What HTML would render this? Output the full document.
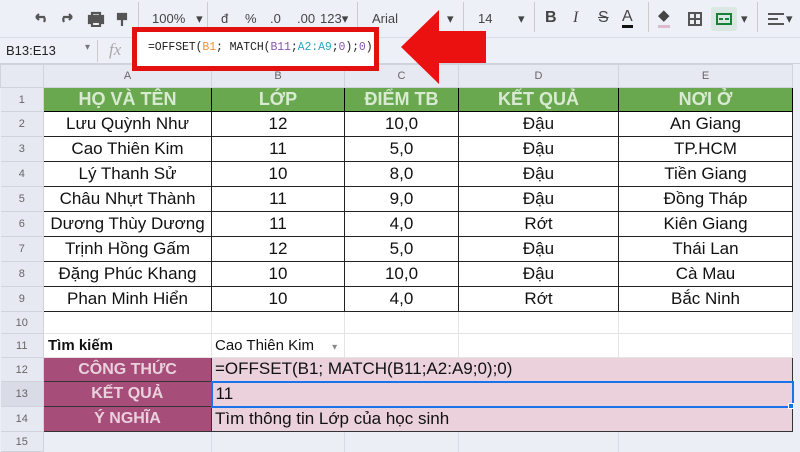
<!DOCTYPE html>
<html><head><meta charset="utf-8"><style>
*{margin:0;padding:0;box-sizing:border-box}
body{width:800px;height:450px;overflow:hidden;background:#eceef6;font-family:"Liberation Sans",Arial,sans-serif;position:relative}
.tb{position:absolute;left:0;top:0;width:800px;height:38px;background:#eef0f8;border-bottom:1px solid #dadce6;color:#444;font-size:13px}
.tb span{position:absolute;top:11px}
.fb{position:absolute;left:0;top:38px;width:800px;height:26px;background:#eef0f8;border-bottom:1px solid #d0d2dc}
table{position:absolute;left:0;top:64px;border-collapse:collapse;table-layout:fixed}
td{overflow:hidden;white-space:nowrap;text-align:center;font-size:17px;color:#111;padding:0}
td.rh{background:#e6e8f2;color:#666;font-size:11px;border:1px solid #d0d2dc;border-left:none}
tr.ch td{background:#e6e8f2;color:#666;font-size:11px;border:1px solid #d0d2dc}
tr.g td.d{background:#6aa84f;color:#d9ead3;font-weight:bold;font-size:18px;border:1px solid #000}
tr.r td.d{background:#fff;border:1px solid #222}
tr.e td.d{background:#fff;border:1px solid #e4e4e4}
td.p{background:#a64d79;color:#ead1dc;font-weight:bold;font-size:16px;border:1px solid #333}
td.k{background:#ead1dc;text-align:left;padding-left:3px;border:1px solid #333}
</style></head><body>
<div class="tb">
<svg style="position:absolute;left:32px;top:11px" width="100" height="16" viewBox="0 0 100 16" fill="none" stroke="#555" stroke-width="2.2"><path d="M4 6h8a5 5 0 0 1 0 5M4 6l3-3M4 6l3 3"/><path d="M40 6h-8a5 5 0 0 0 0 5M40 6l-3-3M40 6l-3 3"/><rect x="57" y="5" width="14" height="7" fill="#555"/><rect x="60" y="2" width="8" height="3"/><rect x="60" y="11" width="8" height="4" fill="#fff"/><path d="M86 3h8v5h-8zM90 8v7" fill="#555"/></svg>
<span style="left:138px;top:2px;height:30px;border-left:1px solid #ccc"></span>
<span style="left:152px">100%&nbsp;&nbsp;&nbsp;▾</span>
<span style="left:207px;top:2px;height:30px;border-left:1px solid #ccc"></span>
<span style="left:221px">đ</span><span style="left:245px">%</span><span style="left:270px">.0</span><span style="left:297px">.00</span><span style="left:320px">123▾</span>
<span style="left:357px;top:2px;height:30px;border-left:1px solid #ccc"></span>
<span style="left:372px">Arial</span><span style="left:447px">▾</span>
<span style="left:463px;top:2px;height:30px;border-left:1px solid #ccc"></span>
<span style="left:478px">14</span><span style="left:518px">▾</span>
<span style="left:534px;top:2px;height:30px;border-left:1px solid #ccc"></span>
<span style="left:545px;font-weight:bold;font-size:16px;top:9px">B</span><span style="left:573px;font-style:italic;font-size:16px;top:9px;font-family:'Liberation Serif'">I</span><span style="left:598px;text-decoration:line-through;font-size:16px;top:9px">S</span><span style="left:622px;font-size:16px;top:8px;border-bottom:3px solid #111;line-height:17px">A</span>
<span style="left:648px;top:2px;height:30px;border-left:1px solid #ccc"></span>
<span style="left:658px;font-size:15px;top:7px;border-bottom:3px solid #ddbcd0;line-height:18px">◆</span>
<svg style="position:absolute;left:688px;top:12px" width="14" height="14" fill="none" stroke="#555" stroke-width="2"><rect x="1" y="1" width="12" height="12"/><path d="M7 1v12M1 7h12"/></svg>
<span style="left:711px;top:7px;width:26px;height:24px;background:#dbe7e3;border-radius:3px"></span>
<svg style="position:absolute;left:716px;top:12px" width="16" height="14" fill="none" stroke="#188038" stroke-width="2"><path d="M1 1v12M15 1v12M3 7h4M13 7h-4M1 2h14M1 12h14"/></svg>
<span style="left:741px">▾</span>
<span style="left:757px;top:2px;height:30px;border-left:1px solid #ccc"></span>
<svg style="position:absolute;left:768px;top:12px" width="16" height="14" stroke="#555" stroke-width="2"><path d="M0 2h16M0 7h10M0 12h16"/></svg><span style="left:786px">▾</span>
</div>
<div class="fb">
<div style="position:absolute;left:6px;top:5px;font-size:13px;color:#222">B13:E13</div>
<div style="position:absolute;left:85px;top:4px;font-size:10px;color:#777">▾</div>
<div style="position:absolute;left:97px;top:2px;height:22px;border-left:1px solid #ccc"></div>
<div style="position:absolute;left:109px;top:2px;font-size:17px;font-style:italic;color:#aaa;font-family:'Liberation Serif'">fx</div>
<div style="position:absolute;left:137px;top:2px;height:22px;border-left:1px solid #ccc"></div>
</div>
<table>
<colgroup><col style="width:43px"><col style="width:168px"><col style="width:133px"><col style="width:114px"><col style="width:160px"><col style="width:174px"></colgroup>
<tr class="ch" style="height:23px"><td></td><td>A</td><td>B</td><td>C</td><td>D</td><td>E</td></tr>
<tr class="g" style="height:24px"><td class="rh">1</td><td class="d">HỌ VÀ TÊN</td><td class="d">LỚP</td><td class="d">ĐIỂM TB</td><td class="d">KẾT QUẢ</td><td class="d">NƠI Ở</td></tr>
<tr class="r" style="height:25px"><td class="rh">2</td><td class="d">Lưu Quỳnh Như</td><td class="d">12</td><td class="d">10,0</td><td class="d">Đậu</td><td class="d">An Giang</td></tr>
<tr class="r" style="height:25px"><td class="rh">3</td><td class="d">Cao Thiên Kim</td><td class="d">11</td><td class="d">5,0</td><td class="d">Đậu</td><td class="d">TP.HCM</td></tr>
<tr class="r" style="height:25px"><td class="rh">4</td><td class="d">Lý Thanh Sử</td><td class="d">10</td><td class="d">8,0</td><td class="d">Đậu</td><td class="d">Tiền Giang</td></tr>
<tr class="r" style="height:25px"><td class="rh">5</td><td class="d">Châu Nhựt Thành</td><td class="d">11</td><td class="d">9,0</td><td class="d">Đậu</td><td class="d">Đồng Tháp</td></tr>
<tr class="r" style="height:25px"><td class="rh">6</td><td class="d">Dương Thùy Dương</td><td class="d">11</td><td class="d">4,0</td><td class="d">Rớt</td><td class="d">Kiên Giang</td></tr>
<tr class="r" style="height:25px"><td class="rh">7</td><td class="d">Trịnh Hồng Gấm</td><td class="d">12</td><td class="d">5,0</td><td class="d">Đậu</td><td class="d">Thái Lan</td></tr>
<tr class="r" style="height:25px"><td class="rh">8</td><td class="d">Đặng Phúc Khang</td><td class="d">10</td><td class="d">10,0</td><td class="d">Đậu</td><td class="d">Cà Mau</td></tr>
<tr class="r" style="height:25px"><td class="rh">9</td><td class="d">Phan Minh Hiển</td><td class="d">10</td><td class="d">4,0</td><td class="d">Rớt</td><td class="d">Bắc Ninh</td></tr>
<tr class="e" style="height:22px"><td class="rh">10</td><td class="d"></td><td class="d"></td><td class="d"></td><td class="d"></td><td class="d"></td></tr>
<tr class="e" style="height:24px"><td class="rh">11</td><td class="d" style="text-align:left;padding-left:4px;font-weight:bold;font-size:15px">Tìm kiếm</td><td class="d" style="text-align:left;padding-left:3px;font-size:15px">Cao Thiên Kim <span style="color:#888;font-size:10px;margin-left:14px">▾</span></td><td class="d"></td><td class="d"></td><td class="d"></td></tr>
<tr style="height:24px"><td class="rh">12</td><td class="p">CÔNG THỨC</td><td class="k" colspan="4">=OFFSET(B1; MATCH(B11;A2:A9;0);0)</td></tr>
<tr style="height:25px"><td class="rh" style="background:#d9dbe6">13</td><td class="p">KẾT QUẢ</td><td class="k" colspan="4" style="border:2px solid #1a73e8">11</td></tr>
<tr style="height:25px"><td class="rh">14</td><td class="p">Ý NGHĨA</td><td class="k" colspan="4">Tìm thông tin Lớp của học sinh</td></tr>
<tr style="height:20px"><td class="rh">15</td><td style="border-right:1px solid #d8dae4"></td><td style="border-right:1px solid #d8dae4"></td><td style="border-right:1px solid #d8dae4"></td><td style="border-right:1px solid #d8dae4"></td><td></td></tr>
</table>
<div style="position:absolute;left:788px;top:403px;width:6px;height:6px;background:#1a73e8;border:1px solid #fff"></div>
<div style="position:absolute;z-index:5;left:132px;top:27px;width:247px;height:44px;border:5px solid #e31010;background:#fff"></div>
<div style="position:absolute;z-index:6;left:148px;top:41px;font-family:'Liberation Mono',monospace;font-size:11.5px;letter-spacing:-0.1px;color:#222">=OFFSET(<span style="color:#f09030">B1</span>; MATCH(<span style="color:#8a55b0">B11</span>;<span style="color:#2aa7c0">A2:A9</span>;<span style="color:#8a55b0">0</span>);<span style="color:#8a55b0">0</span>)</div>
<svg style="position:absolute;z-index:6;left:398px;top:8px" width="92" height="78"><polygon points="3,39 41,2 41,23 88,23 88,55 41,55 41,76" fill="#ec1111"/></svg>
</body></html>
